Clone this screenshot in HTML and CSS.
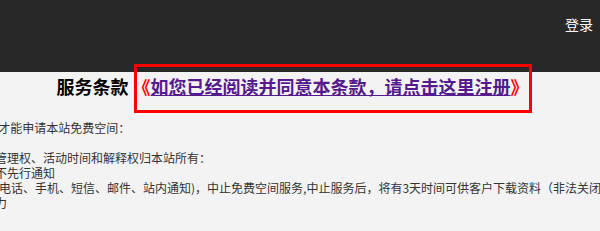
FILE: index.html
```html
<!DOCTYPE html>
<html lang="zh-CN">
<head>
  <meta charset="UTF-8">
  <title>服务条款</title>
  <link rel="stylesheet" href="styles.css">
</head>
<body>

  <div class="topbar">
    <a class="login" href="#">登录</a>
  </div>

  <div class="main">
    <h2 class="title">服务条款 <span class="agree"><span class="quote">《</span><a href="#">如您已经阅读并同意本条款，请点击这里注册</a><span class="quote">》</span></span></h2>

    <div class="terms">
      <p class="gap">一、只有同意本条款后,才能申请本站免费空间：</p>
      <p>三、本站对免费空间的管理权、活动时间和解释权归本站所有：</p>
      <p>四、修改条款时可能会不先行通知</p>
      <p>五、违规时本站会通过(电话、手机、短信、邮件、站内通知)，中止免费空间服务,中止服务后，将有3天时间可供客户下载资料（非法关闭除外）</p>
      <p>六、自然灾害等不可抗力</p>
    </div>
  </div>

</body>
</html>
```

FILE: styles.css
```css
body {
  margin: 0;
  background: #f3f3f3;
  font-family: "Noto Sans CJK SC", "Noto Sans", sans-serif;
  color: #333;
  overflow: hidden;
}

.topbar {
  height: 72px;
  background: #282828;
  display: flex;
  justify-content: flex-end;
  align-items: flex-start;
  padding: 0 7px 0 0;
}

.login {
  margin-top: 14px;
  font-size: 14px;
  line-height: 20px;
  color: #fff;
  text-decoration: none;
}

.title {
  margin: 0;
  padding-right: 15px;
  font-size: 18px;
  line-height: 28px;
  font-weight: bold;
  color: #000;
  text-align: center;
}

.agree {
  position: relative;
  display: inline-block;
}

/* 红框标注 */
.agree::after {
  content: "";
  position: absolute;
  left: 1px;
  right: -3px;
  top: -8px;
  bottom: -13px;
  border: 3px solid #f00;
}

.agree a {
  color: #551a8b;
  text-decoration: underline;
}

.quote {
  color: #f00;
}

.terms {
  margin-top: 20px;
  margin-left: -125px;
  font-size: 12px;
  line-height: 15px;
  white-space: nowrap;
}

.terms p {
  margin: 0;
}

.terms .gap {
  margin-bottom: 15px;
}
```
